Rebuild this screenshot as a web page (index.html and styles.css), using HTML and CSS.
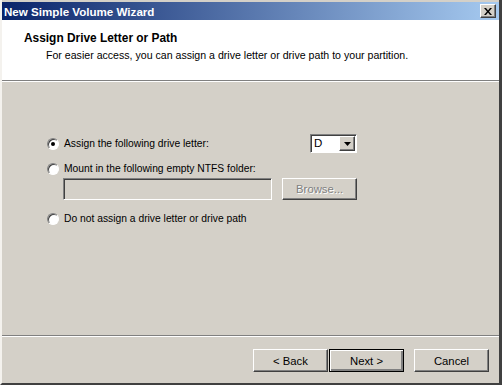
FILE: index.html
```html
<!DOCTYPE html>
<html lang="en">
<head>
    <meta charset="UTF-8">
    <meta name="viewport" content="width=device-width, initial-scale=1.0">
    <title>New Simple Volume Wizard</title>
    <link rel="stylesheet" href="styles.css">
</head>
<body>
    <div class="window">
        <!-- Title bar -->
        <div class="titlebar">
            <span class="title">New Simple Volume Wizard</span>
            <div class="close">
                <svg width="8" height="7" viewBox="0 0 8 7">
                    <path d="M0 0h2l2 2.5L6 0h2L5 3.5 8 7H6L4 4.5 2 7H0l3-3.5z" fill="#000"/>
                </svg>
            </div>
        </div>

        <!-- Header -->
        <div class="header">
            <div class="header-title">Assign Drive Letter or Path</div>
            <div class="header-sub">For easier access, you can assign a drive letter or drive path to your partition.</div>
        </div>
        <div class="separator"></div>

        <!-- Options -->
        <div class="content">
            <div class="options">
                <div class="row row-first">
                    <span class="radio checked"></span>
                    <span class="label">Assign the following drive letter:</span>
                    <div class="select">
                        <span class="select-value">D</span>
                        <span class="select-arrow">
                            <svg width="7" height="4" viewBox="0 0 7 4"><path d="M0 0h7L3.5 4z" fill="#000"/></svg>
                        </span>
                    </div>
                </div>
                <div class="row row-second">
                    <span class="radio"></span>
                    <span class="label">Mount in the following empty NTFS folder:</span>
                </div>
                <div class="folder-row">
                    <div class="textbox"></div>
                    <div class="button disabled browse">Browse...</div>
                </div>
                <div class="row row-third">
                    <span class="radio"></span>
                    <span class="label">Do not assign a drive letter or drive path</span>
                </div>
            </div>
        </div>
        <div class="separator"></div>

        <!-- Buttons -->
        <div class="footer">
            <div class="button">&lt; Back</div>
            <div class="button default">Next &gt;</div>
            <div class="button cancel">Cancel</div>
        </div>
    </div>
</body>
</html>
```

FILE: styles.css
```css
body {
    margin: 0;
    font-family: "Liberation Sans", Arial, sans-serif;
    font-size: 10.3px;
    color: #000;
    background-color: #d4d0c8;
}
.window {
    display: flex;
    flex-direction: column;
    width: 502px;
    height: 385px;
    box-sizing: border-box;
    padding-top: 2px;
    border-left: 2px solid #f4f2ee;
    border-right: 3px solid #404040;
    border-bottom: 2px solid #404040;
    background-color: #d4d0c8;
}
.titlebar {
    display: flex;
    align-items: center;
    justify-content: space-between;
    height: 18px;
    padding: 0 3px 0 2px;
    background: linear-gradient(to right, #0a246a, #a6caf0);
}
.title {
    color: #fff;
    font-weight: bold;
    font-size: 11.6px;
}
.close {
    display: flex;
    align-items: center;
    justify-content: center;
    width: 16px;
    height: 14px;
    box-sizing: border-box;
    background-color: #d4d0c8;
    border-top: 1px solid #fff;
    border-left: 1px solid #fff;
    border-right: 1px solid #404040;
    border-bottom: 1px solid #404040;
    box-shadow: inset -1px -1px 0 #808080;
}
.header {
    height: 60px;
    box-sizing: border-box;
    padding: 11px 0 0 22px;
    background-color: #fff;
}
.header-title {
    font-weight: bold;
    font-size: 11.9px;
}
.header-sub {
    margin-top: 4px;
    padding-left: 22px;
    font-size: 10.6px;
}
.separator {
    height: 1px;
    border-top: 1px solid #808080;
    background-color: #fff;
}
.content {
    flex: 1;
    padding: 52px 0 0 45px;
}
.options {
    width: 310px;
}
.row {
    display: flex;
    align-items: center;
}
.row-first {
    height: 19px;
}
.row-second {
    height: 13px;
    margin-top: 9px;
}
.row-third {
    height: 13px;
    margin-top: 12px;
}
.radio {
    position: relative;
    width: 12px;
    height: 12px;
    box-sizing: border-box;
    margin-right: 5px;
    border-radius: 50%;
    background-color: #fff;
    border: 1px solid;
    border-color: #808080 #fff #fff #808080;
    box-shadow: inset 1px 1px 0 #404040;
}
.radio.checked::after {
    content: "";
    position: absolute;
    left: 3px;
    top: 3px;
    width: 4px;
    height: 4px;
    border-radius: 50%;
    background-color: #000;
}
.select {
    display: flex;
    margin-left: auto;
    width: 47px;
    height: 19px;
    box-sizing: border-box;
    background-color: #fff;
    border: 1px solid;
    border-color: #808080 #fff #fff #808080;
    box-shadow: inset 1px 1px 0 #404040;
}
.select-value {
    flex: 1;
    padding: 2px 0 0 3px;
    font-size: 11.5px;
}
.select-arrow {
    display: flex;
    align-items: center;
    justify-content: center;
    width: 16px;
    margin: 1px 1px 1px 0;
    box-sizing: border-box;
    background-color: #d4d0c8;
    border-top: 1px solid #fff;
    border-left: 1px solid #fff;
    border-right: 1px solid #404040;
    border-bottom: 1px solid #404040;
    box-shadow: inset -1px -1px 0 #808080;
}
.folder-row {
    display: flex;
    margin: 3px 0 0 16px;
}
.textbox {
    width: 210px;
    height: 22px;
    box-sizing: border-box;
    background-color: #d4d0c8;
    border: 1px solid;
    border-color: #808080 #fff #fff #808080;
    box-shadow: inset 1px 1px 0 #404040;
}
.button {
    display: flex;
    align-items: center;
    justify-content: center;
    width: 75px;
    height: 23px;
    box-sizing: border-box;
    font-size: 11.3px;
    background-color: #d4d0c8;
    border-top: 1px solid #fff;
    border-left: 1px solid #fff;
    border-right: 1px solid #404040;
    border-bottom: 1px solid #404040;
    box-shadow: inset -1px -1px 0 #808080;
}
.browse {
    height: 22px;
    margin-left: 10px;
}
.disabled {
    color: #808080;
    text-shadow: 1px 1px 0 #fff;
}
.default {
    border: 1px solid #000;
    box-shadow: inset 1px 1px 0 #fff, inset -2px -2px 0 #808080;
    margin-left: 1px;
}
.cancel {
    margin-left: 10px;
}
.footer {
    display: flex;
    justify-content: flex-end;
    height: 46px;
    box-sizing: border-box;
    padding: 12px 10px 0 0;
}
```
